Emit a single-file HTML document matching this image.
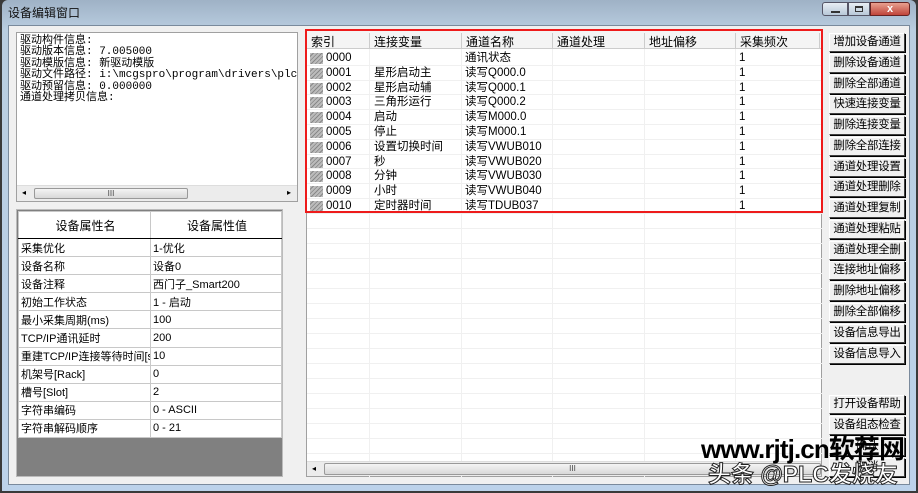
<!DOCTYPE html>
<html><head><meta charset="utf-8"><style>
*{margin:0;padding:0;box-sizing:border-box}
body{width:918px;height:493px;overflow:hidden;background:#3a3a3a;font-family:"Liberation Sans","Noto Sans CJK SC",sans-serif;font-size:12px;color:#000;position:relative}
.a{position:absolute}
.win{left:2px;top:0;width:914px;height:491px;background:linear-gradient(#9fb2c6,#b9cde0 30px,#bcd2ea);border-radius:6px 6px 0 0}
.title{left:8px;top:4px;font-size:12px;color:#111}
.client{left:8px;top:25px;width:902px;height:460px;background:#f0f0f0;border:1px solid #7a8a9c}
.info{left:16px;top:32px;width:282px;height:170px;background:#fff;border:1px solid #a0a0a0;font-family:"Liberation Mono","Noto Sans CJK SC",monospace;font-size:11px;line-height:11.4px;padding:3px 0 0 3px;white-space:pre;overflow:hidden}
.hs{background:#ececec;border-top:1px solid #ddd}
.thumb{background:linear-gradient(#f4f4f4,#d8d8d8);border:1px solid #999;border-radius:2px;text-align:center;font-size:8px;line-height:10px;color:#444}
.prop{left:16px;top:209px;width:267px;height:268px;background:#808080;border:1px solid #bbb}
table{border-collapse:collapse}
.pt{position:absolute;left:1px;top:1px;background:#fff}
.pt td{border:1px solid #c8c8c8;height:18.1px;font-size:11px;padding-left:2px;white-space:nowrap;overflow:hidden;max-width:132px}
.pt tr.h td{height:27px;text-align:center;font-size:12px;border-bottom:1px solid #000;background:#fff}
.list{left:306px;top:30px;width:516px;height:447px;background:#fff;border:1px solid #a0a0a0}
.lh{left:0;top:0;height:18px;width:516px;background:#f4f4f4;border-bottom:1px solid #ccc}
.lh span{position:absolute;top:2px;font-size:12px;border-left:1px solid #ccc;padding-left:4px;height:15px}
.row{position:absolute;left:0;width:516px;height:14.8px;border-bottom:1px solid #f0f0f0;font-size:11.5px}
.row span{position:absolute;top:0;line-height:14px}
.ic{position:absolute;left:3px;top:2px;width:13px;height:11px;background:repeating-linear-gradient(135deg,#bbb 0 2px,#888 2px 3px)}
.vl{position:absolute;top:18px;width:1px;height:430px;background:#f0f0f0}
.red{left:305px;top:29px;width:518px;height:184px;border:2.5px solid #ee1b1b}
.btn{position:absolute;left:829px;width:76px;height:19px;background:#f0f0f0;border:1px solid;border-color:#fff #404040 #404040 #fff;box-shadow:1px 1px 0 #000;font-size:11.5px;text-align:center;line-height:17px;white-space:nowrap;overflow:hidden;letter-spacing:-0.3px}
.wm1{left:701px;top:429px;font-size:26px;font-weight:bold;color:#000;letter-spacing:-0.9px;white-space:nowrap}
.wm2{left:708px;top:455px;font-size:23px;color:#fff;white-space:nowrap;-webkit-text-stroke:1px #222;font-weight:bold}
</style></head><body>
<div class="a win"></div>
<div class="a title">设备编辑窗口</div>
<div class="a" style="left:822px;top:2px;width:26px;height:14px;border:1px solid #556;border-radius:3px 0 0 3px;background:linear-gradient(#e8eef4,#b8c8d8)"><div class="a" style="left:8px;top:8px;width:9px;height:2px;background:#333"></div></div>
<div class="a" style="left:848px;top:2px;width:22px;height:14px;border:1px solid #556;background:linear-gradient(#e8eef4,#b8c8d8)"><div class="a" style="left:6px;top:3px;width:8px;height:6px;border:1px solid #333;border-top-width:2px"></div></div>
<div class="a" style="left:870px;top:2px;width:40px;height:14px;border:1px solid #622;border-radius:0 3px 3px 0;background:linear-gradient(#e8a090,#c0453a);color:#fff;text-align:center;font-size:11px;line-height:12px;font-weight:bold">x</div>
<div class="a client"></div>
<div class="a info">驱动构件信息:
驱动版本信息: 7.005000
驱动模版信息: 新驱动模版
驱动文件路径: i:\mcgspro\program\drivers\plc\西
驱动预留信息: 0.000000
通道处理拷贝信息:</div>
<div class="a hs" style="left:17px;top:185px;width:280px;height:16px"><div class="a thumb" style="left:17px;top:2px;width:154px;height:11px">III</div><span class="a" style="left:5px;top:2px;font-size:8px">◂</span><span class="a" style="left:270px;top:2px;font-size:8px">▸</span></div>
<div class="a prop">
<table class="pt">
<tr class="h"><td style="width:132px">设备属性名</td><td style="width:132px">设备属性值</td></tr>
<tr><td>采集优化</td><td>1-优化</td></tr>
<tr><td>设备名称</td><td>设备0</td></tr>
<tr><td>设备注释</td><td>西门子_Smart200</td></tr>
<tr><td>初始工作状态</td><td>1 - 启动</td></tr>
<tr><td>最小采集周期(ms)</td><td>100</td></tr>
<tr><td>TCP/IP通讯延时</td><td>200</td></tr>
<tr><td>重建TCP/IP连接等待时间[s]</td><td>10</td></tr>
<tr><td>机架号[Rack]</td><td>0</td></tr>
<tr><td>槽号[Slot]</td><td>2</td></tr>
<tr><td>字符串编码</td><td>0 - ASCII</td></tr>
<tr><td>字符串解码顺序</td><td>0 - 21</td></tr>
</table></div>
<div class="a list">
<div class="a lh"><span style="left:0;border:0">索引</span><span style="left:62px">连接变量</span><span style="left:154px">通道名称</span><span style="left:245px">通道处理</span><span style="left:337px">地址偏移</span><span style="left:428px">采集频次</span><span style="left:512px;width:4px"></span></div>
<div class="vl" style="left:62px"></div><div class="vl" style="left:154px"></div><div class="vl" style="left:245px"></div><div class="vl" style="left:337px"></div><div class="vl" style="left:428px"></div>
<div class="row" style="top:20px"><i class="ic"></i><span style="left:19px">0000</span><span style="left:158px">通讯状态</span><span style="left:432px">1</span></div>
<div class="row" style="top:34.8px"><i class="ic"></i><span style="left:19px">0001</span><span style="left:67px">星形启动主</span><span style="left:158px">读写Q000.0</span><span style="left:432px">1</span></div>
<div class="row" style="top:49.6px"><i class="ic"></i><span style="left:19px">0002</span><span style="left:67px">星形启动辅</span><span style="left:158px">读写Q000.1</span><span style="left:432px">1</span></div>
<div class="row" style="top:64.4px"><i class="ic"></i><span style="left:19px">0003</span><span style="left:67px">三角形运行</span><span style="left:158px">读写Q000.2</span><span style="left:432px">1</span></div>
<div class="row" style="top:79.2px"><i class="ic"></i><span style="left:19px">0004</span><span style="left:67px">启动</span><span style="left:158px">读写M000.0</span><span style="left:432px">1</span></div>
<div class="row" style="top:94px"><i class="ic"></i><span style="left:19px">0005</span><span style="left:67px">停止</span><span style="left:158px">读写M000.1</span><span style="left:432px">1</span></div>
<div class="row" style="top:108.8px"><i class="ic"></i><span style="left:19px">0006</span><span style="left:67px">设置切换时间</span><span style="left:158px">读写VWUB010</span><span style="left:432px">1</span></div>
<div class="row" style="top:123.6px"><i class="ic"></i><span style="left:19px">0007</span><span style="left:67px">秒</span><span style="left:158px">读写VWUB020</span><span style="left:432px">1</span></div>
<div class="row" style="top:138.4px"><i class="ic"></i><span style="left:19px">0008</span><span style="left:67px">分钟</span><span style="left:158px">读写VWUB030</span><span style="left:432px">1</span></div>
<div class="row" style="top:153.2px"><i class="ic"></i><span style="left:19px">0009</span><span style="left:67px">小时</span><span style="left:158px">读写VWUB040</span><span style="left:432px">1</span></div>
<div class="row" style="top:168px"><i class="ic"></i><span style="left:19px">0010</span><span style="left:67px">定时器时间</span><span style="left:158px">读写TDUB037</span><span style="left:432px">1</span></div>
<div class="row" style="top:183px"></div><div class="row" style="top:198px"></div><div class="row" style="top:213px"></div><div class="row" style="top:228px"></div><div class="row" style="top:243px"></div><div class="row" style="top:258px"></div><div class="row" style="top:273px"></div><div class="row" style="top:288px"></div><div class="row" style="top:303px"></div><div class="row" style="top:318px"></div><div class="row" style="top:333px"></div><div class="row" style="top:348px"></div><div class="row" style="top:363px"></div><div class="row" style="top:378px"></div><div class="row" style="top:393px"></div><div class="row" style="top:408px"></div>
<div class="a hs" style="left:0;top:430px;width:514px;height:15px"><div class="a thumb" style="left:17px;top:1px;width:497px;height:12px">III</div><span class="a" style="left:5px;top:2px;font-size:8px">◂</span></div>
</div>
<div class="a red"></div>
<div class="btn" style="top:33px">增加设备通道</div>
<div class="btn" style="top:54px">删除设备通道</div>
<div class="btn" style="top:75px">删除全部通道</div>
<div class="btn" style="top:95px">快速连接变量</div>
<div class="btn" style="top:116px">删除连接变量</div>
<div class="btn" style="top:137px">删除全部连接</div>
<div class="btn" style="top:158px">通道处理设置</div>
<div class="btn" style="top:178px">通道处理删除</div>
<div class="btn" style="top:199px">通道处理复制</div>
<div class="btn" style="top:220px">通道处理粘贴</div>
<div class="btn" style="top:241px">通道处理全删</div>
<div class="btn" style="top:261px">连接地址偏移</div>
<div class="btn" style="top:282px">删除地址偏移</div>
<div class="btn" style="top:303px">删除全部偏移</div>
<div class="btn" style="top:324px">设备信息导出</div>
<div class="btn" style="top:345px">设备信息导入</div>
<div class="btn" style="top:395px">打开设备帮助</div>
<div class="btn" style="top:416px">设备组态检查</div>
<div class="btn" style="top:437px">确认</div>
<div class="btn" style="top:458px">取消</div>
<div class="a wm1">www.rjtj.cn软荐网</div>
<div class="a wm2">头条 @PLC发烧友</div>
</body></html>
